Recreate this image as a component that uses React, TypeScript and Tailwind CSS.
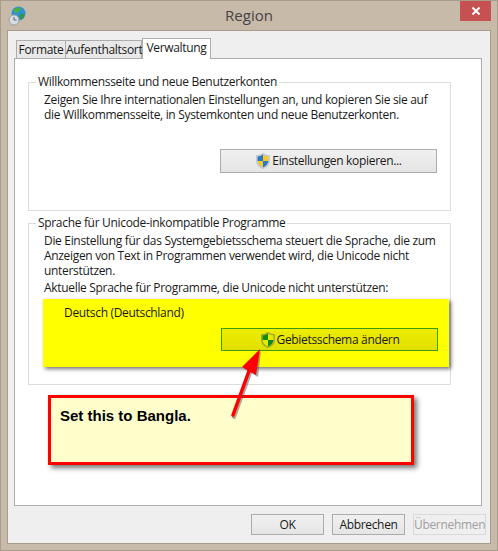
import React from 'react';

const font = { fontFamily: '"Open Sans", "Noto Sans", sans-serif' };

const Shield = ({ a, b, edge }: { a: string; b: string; edge: string }) => (
  <svg width="16" height="18" viewBox="0 0 16 18" className="shrink-0">
    <path d="M8 .7 C6 2.3 3.6 3 1 3 V9 C1 13 4 15.6 8 17.3 C12 15.6 15 13 15 9 V3 C12.4 3 10 2.3 8 .7Z" fill={edge} />
    <path d="M8 2.5 V9 H2.6 V4.5 C4.6 4.4 6.4 3.7 8 2.5Z" fill={a} />
    <path d="M8 2.5 C9.6 3.7 11.4 4.4 13.4 4.5 V9 H8Z" fill={b} />
    <path d="M2.6 9 H8 V15.4 C5 14 2.8 12 2.6 9Z" fill={b} />
    <path d="M8 9 H13.4 C13.2 12 11 14 8 15.4Z" fill={a} />
  </svg>
);

const Globe = () => (
  <svg width="22" height="24" viewBox="0 0 22 24">
    <circle cx="12.5" cy="10.5" r="7" fill="#2f8fd8" />
    <path d="M8 6 C10 4 14 4 15 6 C14 9 12 8 11 10 C9 11 7 9 8 6Z" fill="#46b04a" />
    <path d="M14 11 C16 10 18 11 18.5 12 C18 15 16 16.5 14.5 16.5 C13.5 15 13 13 14 11Z" fill="#2f9a46" />
    <circle cx="8" cy="17" r="5" fill="#d7dce0" stroke="#9aa3aa" strokeWidth="1" />
    <path d="M8 14 V17 H10.5" stroke="#5a6066" strokeWidth="1" fill="none" />
  </svg>
);

const Fieldset = ({ title, className, children }: { title: string; className: string; children: React.ReactNode }) => (
  <fieldset className={`border border-[#dcdcdc] mx-[13px] ${className}`}>
    <legend className="ml-[7px] px-[2px] text-[12px] leading-[16px]">{title}</legend>
    {children}
  </fieldset>
);

const FooterButton = ({ label, disabled }: { label: string; disabled?: boolean }) => (
  <button
    className={`w-[73px] h-[21px] border text-[12px] leading-[16px] ${
      disabled
        ? 'border-[#d9d9d9] text-[#a0a0a0] bg-[#efefef]'
        : 'border-[#acacac] bg-gradient-to-b from-[#f0f0f0] to-[#e5e5e5] text-[#1a1a1a]'
    }`}
  >
    {label}
  </button>
);

export default function App() {
  return (
    <div
      className="relative w-[498px] h-[551px] border border-[#a89c8c] bg-[#c7baa8] flex flex-col text-[#1a1a1a] tracking-[-0.32px] overflow-hidden"
      style={font}
    >
      <div className="h-[29px] shrink-0 relative flex items-center justify-center">
        <div className="absolute left-[5px] top-[2px]">
          <Globe />
        </div>
        <span className="text-[15px] text-[#444444] tracking-normal">Region</span>
        <div className="absolute top-0 right-[6px] w-[31px] h-[20px] bg-[#c75050] flex items-center justify-center">
          <svg width="10" height="10" viewBox="0 0 10 10">
            <path d="M1.5 1.5 L8.5 8.5 M8.5 1.5 L1.5 8.5" stroke="#fff" strokeWidth="2" />
          </svg>
        </div>
      </div>

      <div className="mx-[6px] w-[484px] h-[514px] border border-[#a89c8c] bg-[#efefef] flex flex-col px-[6px]">
        <div className="flex items-end h-[27px] pl-[2px] shrink-0 relative z-10">
          <div className="w-[50px] h-[18px] border border-b-0 border-[#acacac] bg-[#e8e8e8] text-[12px] leading-[17px] text-center">
            Formate
          </div>
          <div className="w-[76px] h-[18px] border border-b-0 border-l-0 border-[#acacac] bg-[#e8e8e8] text-[12px] leading-[17px] text-center">
            Aufenthaltsort
          </div>
          <div className="w-[69px] h-[21px] -mb-px border border-b-0 border-[#acacac] bg-white text-[12px] leading-[17px] text-center">
            Verwaltung
          </div>
        </div>

        <div className="relative w-[468px] h-[448px] border border-[#acacac] bg-white flex flex-col pt-[15px]">
          <Fieldset title="Willkommensseite und neue Benutzerkonten" className="h-[137px] w-[423px]">
            <p className="ml-[15px] mt-[2px] text-[12px] leading-[15px]">
              Zeigen Sie Ihre internationalen Einstellungen an, und kopieren Sie sie auf
              <br />
              die Willkommensseite, in Systemkonten und neue Benutzerkonten.
            </p>
            <div className="flex justify-end pr-[13px] mt-[27px]">
              <button className="w-[217px] h-[24px] border border-[#acacac] bg-gradient-to-b from-[#f0f0f0] to-[#e5e5e5] flex items-center justify-center gap-[1px] text-[12px] leading-[16px]">
                <Shield a="#2f78c8" b="#f2c928" edge="#c4ccd4" />
                Einstellungen kopieren...
              </button>
            </div>
          </Fieldset>

          <Fieldset title="Sprache für Unicode-inkompatible Programme" className="h-[170px] w-[423px] mt-[4px]">
            <p className="ml-[15px] mt-[2px] text-[12px] leading-[15px]">
              Die Einstellung für das Systemgebietsschema steuert die Sprache, die zum
              <br />
              Anzeigen von Text in Programmen verwendet wird, die Unicode nicht
              <br />
              unterstützen.
            </p>
            <p className="ml-[15px] mt-[2px] text-[12px] leading-[15px]">
              Aktuelle Sprache für Programme, die Unicode nicht unterstützen:
            </p>
            <div className="ml-[14px] mt-[4px] w-[406px] h-[68px] bg-[#ffff00] shadow-[2px_2px_4px_rgba(0,0,0,0.55)] flex flex-col">
              <div className="ml-[21px] mt-[6px] text-[12px] leading-[16px]">Deutsch (Deutschland)</div>
              <div className="flex justify-end pr-[11px] mt-[7px]">
                <button className="w-[217px] h-[23px] border border-[#3d9a10] bg-gradient-to-b from-[#eded00] to-[#e0e000] flex items-center justify-center gap-[1px] text-[12px] leading-[16px]">
                  <Shield a="#118a11" b="#e8e800" edge="#a8b028" />
                  Gebietsschema ändern
                </button>
              </div>
            </div>
          </Fieldset>

          {/* annotation on top of the dialog */}
          <div className="absolute left-[33px] top-[336px] w-[366px] h-[70px] border-[3px] border-[#ff0000] bg-[#ffffcc] shadow-[3px_3px_5px_rgba(0,0,0,0.55)] pl-[9px] pt-[5px]">
            <span className="text-[15px] leading-[20px] font-bold text-black tracking-normal" style={{ fontFamily: '"Liberation Sans", sans-serif' }}>
              Set this to Bangla.
            </span>
          </div>
          <svg className="absolute left-[205px] top-[280px]" width="60" height="90" viewBox="0 0 60 90">
            <path d="M14 78 L30 34" stroke="#555" strokeOpacity="0.5" strokeWidth="4" strokeLinecap="round" />
            <path d="M41 12 L38 38 L24 30Z" fill="#555" fillOpacity="0.5" />
            <path d="M13 76 L29 32" stroke="#ff0000" strokeWidth="3.5" strokeLinecap="round" />
            <path d="M40 10 L36 36 L22 28Z" fill="#ff0000" />
          </svg>
        </div>

        <div className="flex justify-end gap-[8px] mt-[8px] -mr-[2px]">
          <FooterButton label="OK" />
          <FooterButton label="Abbrechen" />
          <FooterButton label="Übernehmen" disabled />
        </div>
      </div>
    </div>
  );
}
